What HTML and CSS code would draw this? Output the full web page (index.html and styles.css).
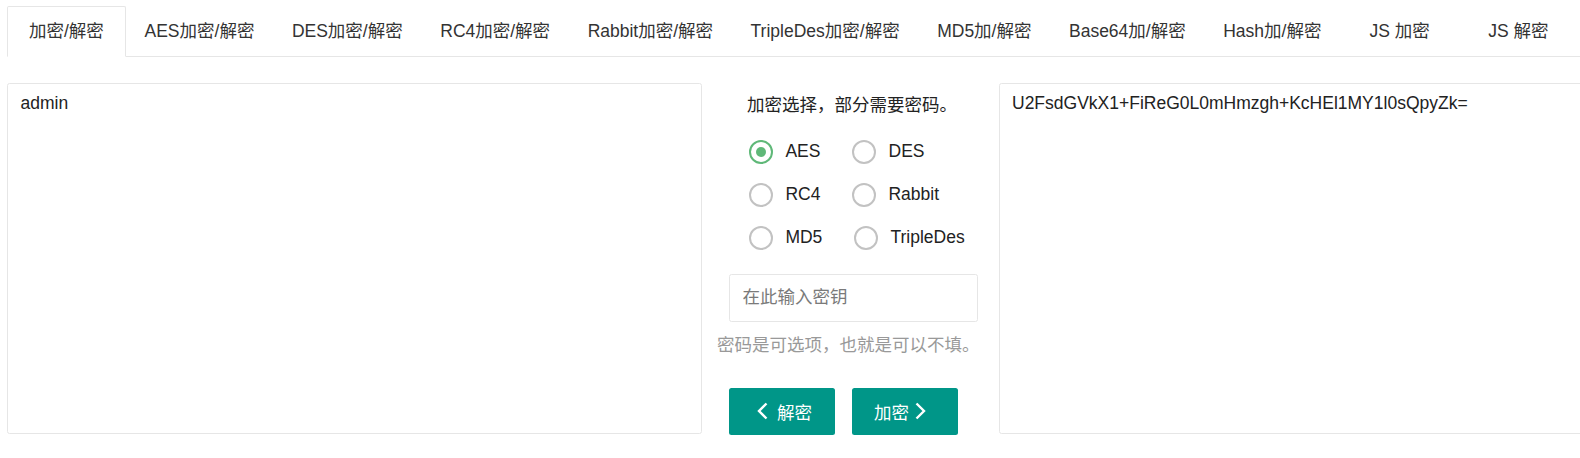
FILE: index.html
```html
<!DOCTYPE html>
<html lang="zh-CN">
<head>
<meta charset="utf-8">
<title>加密/解密</title>
<link rel="stylesheet" href="styles.css">
</head>
<body>
<div class="page">
  <ul class="tabs">
    <li class="tab active">加密/解密</li>
    <li class="tab">AES加密/解密</li>
    <li class="tab">DES加密/解密</li>
    <li class="tab">RC4加密/解密</li>
    <li class="tab">Rabbit加密/解密</li>
    <li class="tab">TripleDes加密/解密</li>
    <li class="tab">MD5加/解密</li>
    <li class="tab">Base64加/解密</li>
    <li class="tab">Hash加/解密</li>
    <li class="tab">JS 加密</li>
    <li class="tab">JS 解密</li>
  </ul>
  <div class="panel">
    <textarea class="box">admin</textarea>
    <div class="mid">
      <div class="mid-title">加密选择，部分需要密码。</div>
      <div class="radios">
        <label class="radio"><span class="circle checked"></span><span class="rlabel">AES</span></label>
        <label class="radio"><span class="circle"></span><span class="rlabel">DES</span></label>
        <label class="radio"><span class="circle"></span><span class="rlabel">RC4</span></label>
        <label class="radio"><span class="circle"></span><span class="rlabel">Rabbit</span></label>
        <label class="radio"><span class="circle"></span><span class="rlabel">MD5</span></label>
        <label class="radio"><span class="circle"></span><span class="rlabel">TripleDes</span></label>
      </div>
      <input class="key" type="text" placeholder="在此输入密钥">
      <div class="hint">密码是可选项，也就是可以不填。</div>
      <div class="btns">
        <button class="btn btn-dec"><svg class="chev" width="11" height="18" viewBox="0 0 11 18"><polyline points="9.5,1.5 2,9 9.5,16.5" fill="none" stroke="#fff" stroke-width="2.4"/></svg><span class="btxt">解密</span></button>
        <button class="btn btn-enc"><span class="btxt">加密</span><svg class="chev" width="11" height="18" viewBox="0 0 11 18"><polyline points="1.5,1.5 9,9 1.5,16.5" fill="none" stroke="#fff" stroke-width="2.4"/></svg></button>
      </div>
    </div>
    <textarea class="box">U2FsdGVkX1+FiReG0L0mHmzgh+KcHEl1MY1l0sQpyZk=</textarea>
  </div>
</div>
</body>
</html>
```

FILE: styles.css
```css
html, body {
  margin: 0;
  padding: 0;
  background: #fff;
}
body {
  width: 1580px;
  height: 458px;
  overflow: hidden;
  font-family: "Liberation Sans", "Noto Sans CJK SC", sans-serif;
  font-size: 17.5px;
  color: #333;
}
.page {
  padding: 6px 0 0 7px;
}
.tabs {
  list-style: none;
  margin: 0;
  padding: 0;
  display: flex;
  height: 50px;
  border-bottom: 1px solid #e6e6e6;
  white-space: nowrap;
}
.tab {
  flex: 0 0 auto;
  box-sizing: content-box;
  min-width: 81.25px;
  padding: 0 18.75px;
  height: 50px;
  line-height: 50px;
  text-align: center;
  color: #333;
}
.tab.active {
  box-sizing: border-box;
  min-width: 118.75px;
  height: 51px;
  border: 1px solid #e6e6e6;
  border-bottom-color: #fff;
  border-radius: 2px 2px 0 0;
  line-height: 49px;
  background: #fff;
}
.panel {
  display: flex;
  margin-top: 26px;
}
.box {
  flex: 0 0 auto;
  box-sizing: border-box;
  width: 695px;
  height: 350.5px;
  margin: 0;
  padding: 7px 12.5px;
  border: 1px solid #e6e6e6;
  border-radius: 2.5px;
  font-family: "Liberation Sans", "Noto Sans CJK SC", sans-serif;
  font-size: 17.5px;
  line-height: 25px;
  color: #222;
  resize: none;
  outline: none;
  overflow: hidden;
  background: #fff;
}
.mid {
  flex: 0 0 auto;
  box-sizing: border-box;
  width: 296.5px;
  padding-left: 27px;
  display: flex;
  flex-direction: column;
  align-items: flex-start;
}
.mid-title {
  margin: 10px 0 0 18px;
  line-height: 25px;
  color: #222;
}
.radios {
  margin: 12px 0 0 20px;
  width: 250px;
  display: flex;
  flex-wrap: wrap;
  column-gap: 31.7px;
}
.radio {
  display: flex;
  align-items: center;
  height: 43px;
  color: #222;
}
.circle {
  position: relative;
  box-sizing: border-box;
  width: 24px;
  height: 24px;
  border: 2px solid #c2c2c2;
  border-radius: 50%;
  margin-right: 12.4px;
}
.circle.checked {
  border-color: #5fb878;
}
.circle.checked::after {
  content: "";
  position: absolute;
  left: 5px;
  top: 5px;
  width: 10px;
  height: 10px;
  border-radius: 50%;
  background: #5fb878;
}
.rlabel {
  line-height: 25px;
}
.key {
  box-sizing: border-box;
  margin: 15px 0 0 0;
  width: 249px;
  height: 47.5px;
  padding: 0 12.5px;
  border: 1px solid #e6e6e6;
  border-radius: 2.5px;
  font-family: "Liberation Sans", "Noto Sans CJK SC", sans-serif;
  font-size: 17.5px;
  color: #333;
  outline: none;
}
.key::placeholder {
  color: #7a7a7a;
}
.hint {
  margin: 11.5px 0 0 -12px;
  line-height: 25px;
  color: #999;
  white-space: nowrap;
}
.btns {
  display: flex;
  gap: 17.3px;
  margin-top: 29.7px;
}
.btn {
  box-sizing: border-box;
  display: flex;
  align-items: center;
  height: 47px;
  width: 105.7px;
  border: none;
  border-radius: 2.5px;
  background: #009688;
  color: #fff;
  font-family: "Liberation Sans", "Noto Sans CJK SC", sans-serif;
  font-size: 17.5px;
  padding: 0;
}
.btn-dec {
  padding-left: 28px;
}
.btn-dec .btxt {
  margin-left: 9px;
}
.btn-enc {
  padding-left: 22px;
}
.btn-enc .chev {
  margin-left: 6.5px;
}
.chev {
  display: block;
  flex: 0 0 auto;
}
```
